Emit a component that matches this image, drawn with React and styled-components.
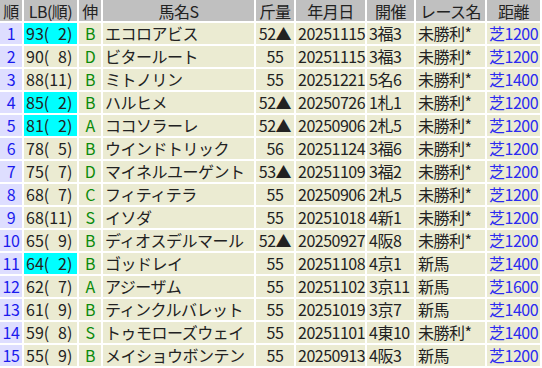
import styled, { createGlobalStyle } from "styled-components";

const GlobalStyle = createGlobalStyle`
  html, body { margin: 0; padding: 0; background: #fff; }
  body { font-family: "Noto Sans CJK JP", "Noto Sans", sans-serif; }
`;

const cols = [22, 53, 22, 151, 38, 69, 47, 69, 53];
const heads = ["順", "LB(順)", "伸", "馬名S", "斤量", "年月日", "開催", "レース名", "距離"];

// figure space keeps the single-digit ranks lined up
const F = "\u2007";

const rows = [
  ["93(" + F + "2)", "B", "エコロアビス", "52▲", "20251115", "3福3", "未勝利*", "芝1200", true],
  ["90(" + F + "8)", "D", "ビタールート", "55", "20251115", "3福3", "未勝利*", "芝1200"],
  ["88(11)", "B", "ミトノリン", "55", "20251221", "5名6", "未勝利*", "芝1400"],
  ["85(" + F + "2)", "B", "ハルヒメ", "52▲", "20250726", "1札1", "未勝利*", "芝1200", true],
  ["81(" + F + "2)", "A", "ココソラーレ", "52▲", "20250906", "2札5", "未勝利*", "芝1200", true],
  ["78(" + F + "5)", "B", "ウインドトリック", "56", "20251124", "3福6", "未勝利*", "芝1200"],
  ["75(" + F + "7)", "D", "マイネルユーゲント", "53▲", "20251109", "3福2", "未勝利*", "芝1200"],
  ["68(" + F + "7)", "C", "フィティテラ", "55", "20250906", "2札5", "未勝利*", "芝1200"],
  ["68(11)", "S", "イソダ", "55", "20251018", "4新1", "未勝利*", "芝1200"],
  ["65(" + F + "9)", "B", "ディオスデルマール", "52▲", "20250927", "4阪8", "未勝利*", "芝1200"],
  ["64(" + F + "2)", "B", "ゴッドレイ", "55", "20251108", "4京1", "新馬", "芝1400", true],
  ["62(" + F + "7)", "A", "アジーザム", "55", "20251102", "3京11", "新馬", "芝1600"],
  ["61(" + F + "9)", "B", "ティンクルバレット", "55", "20251019", "3京7", "新馬", "芝1400"],
  ["59(" + F + "8)", "S", "トゥモローズウェイ", "55", "20251101", "4東10", "未勝利*", "芝1400"],
  ["55(" + F + "9)", "B", "メイショウボンテン", "55", "20250913", "4阪3", "新馬", "芝1200"],
];

const Table = styled.table`
  border-collapse: separate;
  border-spacing: 2px;
  margin: -2px 0 0 -2px;
  table-layout: fixed;
  width: 544px;
  font-size: 16px;
  letter-spacing: -0.5px;
  color: #222;
`;

const Th = styled.th`
  background: #c0c0c0;
  height: 19px;
  padding: 2px 0 0;
  font-weight: normal;
  text-align: center;
  line-height: 19px;
  white-space: nowrap;
`;

const Td = styled.td`
  background: ${(p) => p.$bg || "#ebebd2"};
  color: ${(p) => p.$color || "#222"};
  height: 21px;
  padding: 0 ${(p) => (p.$align === "center" ? 0 : "2px")};
  text-align: ${(p) => p.$align || "left"};
  letter-spacing: ${(p) => (p.$wide ? "0" : "inherit")};
  line-height: 21px;
  white-space: pre;
`;

export default function App() {
  return (
    <>
      <GlobalStyle />
      <Table>
        <colgroup>
          {cols.map((w, i) => (
            <col key={i} style={{ width: w }} />
          ))}
        </colgroup>
        <thead>
          <tr>
            {heads.map((h) => (
              <Th key={h}>{h}</Th>
            ))}
          </tr>
        </thead>
        <tbody>
          {rows.map((r, i) => (
            <tr key={i}>
              <Td $align="center" $bg="#dedeff" $color="#1a1aee">{i + 1}</Td>
              <Td $wide $bg={r[8] ? "#00ffff" : undefined}>{r[0]}</Td>
              <Td $align="center" $color="#0a8a0a">{r[1]}</Td>
              <Td>{r[2]}</Td>
              <Td $align="center">{r[3]}</Td>
              <Td>{r[4]}</Td>
              <Td>{r[5]}</Td>
              <Td>{r[6]}</Td>
              <Td $color="#2b2bf0">{r[7]}</Td>
            </tr>
          ))}
        </tbody>
      </Table>
    </>
  );
}
